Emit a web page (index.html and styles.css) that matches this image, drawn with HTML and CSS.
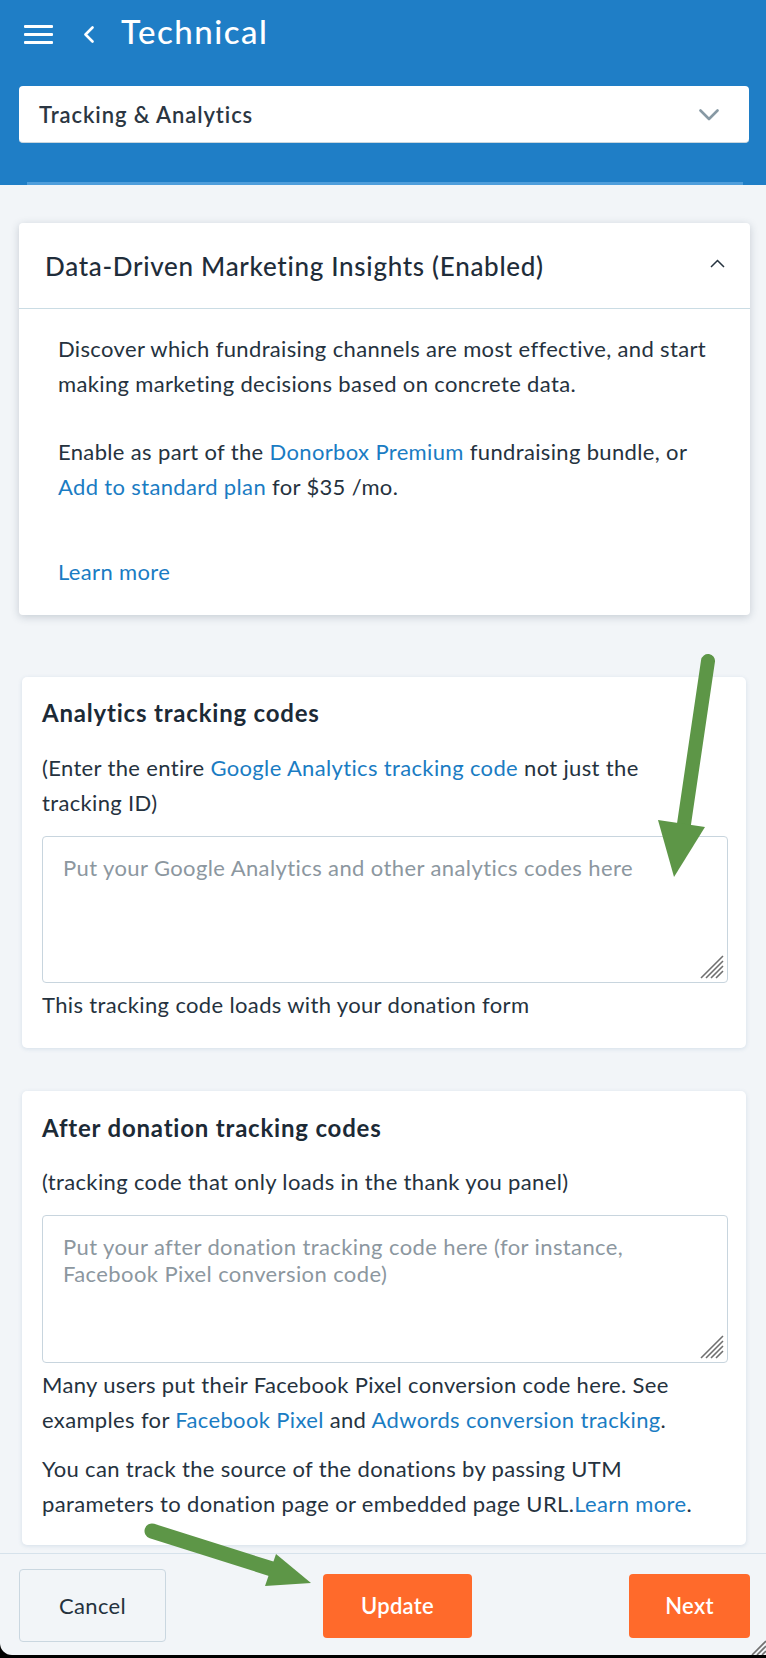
FILE: index.html
```html
<!DOCTYPE html>
<html lang="en">
<head>
<meta charset="utf-8">
<title>Technical – Tracking &amp; Analytics</title>
<link rel="stylesheet" href="styles.css">
</head>
<body>
<div class="app">
  <header class="header">
    <div class="topbar">
      <svg class="icon-menu" width="29" height="19" viewBox="0 0 29 19" aria-hidden="true">
        <rect x="0" y="0" width="29" height="3" rx="1" fill="#fff"/>
        <rect x="0" y="8" width="29" height="3" rx="1" fill="#fff"/>
        <rect x="0" y="16" width="29" height="3" rx="1" fill="#fff"/>
      </svg>
      <svg class="icon-back" width="12" height="17" viewBox="0 0 12 17" aria-hidden="true">
        <path d="M9.5 1.5 L2.5 8.5 L9.5 15.5" fill="none" stroke="#fff" stroke-width="2.6" stroke-linecap="round" stroke-linejoin="round"/>
      </svg>
      <h1 class="title">Technical</h1>
    </div>
    <div class="select">
      <span class="select-label">Tracking &amp; Analytics</span>
      <svg class="select-caret" width="20" height="12" viewBox="0 0 20 12" aria-hidden="true">
        <path d="M1.5 1.5 L10 10 L18.5 1.5" fill="none" stroke="#8799a4" stroke-width="2.6" stroke-linecap="round" stroke-linejoin="round"/>
      </svg>
    </div>
    <div class="tab-line"></div>
  </header>

  <main class="content">
    <section class="panel">
      <div class="panel-head">
        <h2 class="panel-title">Data-Driven Marketing Insights (Enabled)</h2>
        <svg class="panel-caret" width="15" height="9" viewBox="0 0 15 9" aria-hidden="true">
          <path d="M1 8 L7.5 1.5 L14 8" fill="none" stroke="#26333f" stroke-width="1.5"/>
        </svg>
      </div>
      <div class="panel-body">
        <p class="text">Discover which fundraising channels are most effective, and start making marketing decisions based on concrete data.</p>
        <p class="text gap-33">Enable as part of the <a class="link" href="#">Donorbox Premium</a> fundraising bundle, or <a class="link" href="#">Add to standard plan</a> for $35 /mo.</p>
        <p class="text gap-50"><a class="link" href="#">Learn more</a></p>
      </div>
    </section>

    <section class="card card-analytics">
      <h3 class="card-title">Analytics tracking codes</h3>
      <p class="text card-text gap-20">(Enter the entire <a class="link" href="#">Google Analytics tracking code</a> not just the tracking ID)</p>
      <div class="field gap-16">
        <textarea class="code-input code-input-a" placeholder="Put your Google Analytics and other analytics codes here"></textarea>
        <svg class="grip" width="26" height="26" viewBox="0 0 26 26" aria-hidden="true">
          <path d="M2 24 L24 2 M7 24 L24 7 M12 24 L24 12 M17 24 L24 17" stroke="#707070" stroke-width="1.6"/>
        </svg>
      </div>
      <p class="text card-text gap-4">This tracking code loads with your donation form</p>
    </section>

    <section class="card card-after">
      <h3 class="card-title">After donation tracking codes</h3>
      <p class="text card-text gap-19">(tracking code that only loads in the thank you panel)</p>
      <div class="field gap-16">
        <textarea class="code-input code-input-b" placeholder="Put your after donation tracking code here (for instance, Facebook Pixel conversion code)"></textarea>
        <svg class="grip" width="26" height="26" viewBox="0 0 26 26" aria-hidden="true">
          <path d="M2 24 L24 2 M7 24 L24 7 M12 24 L24 12 M17 24 L24 17" stroke="#707070" stroke-width="1.6"/>
        </svg>
      </div>
      <p class="text card-text gap-4">Many users put their Facebook Pixel conversion code here. See examples for <a class="link" href="#">Facebook Pixel</a> and <a class="link" href="#">Adwords conversion tracking</a>.</p>
      <p class="text card-text gap-14">You can track the source of the donations by passing UTM parameters to donation page or embedded page URL.<a class="link" href="#">Learn more</a>.</p>
    </section>
  </main>

  <footer class="footer">
    <button class="btn btn-cancel" type="button">Cancel</button>
    <button class="btn btn-primary btn-update" type="button">Update</button>
    <button class="btn btn-primary btn-next" type="button">Next</button>
    <svg class="window-grip" width="16" height="16" viewBox="0 0 16 16" aria-hidden="true">
      <path d="M2 16 L16 2 M7 16 L16 7 M12 16 L16 12" stroke="#707070" stroke-width="1.6"/>
    </svg>
  </footer>

  <svg class="pointers" width="766" height="1658" viewBox="0 0 766 1658" aria-hidden="true">
    <g fill="#5d9647" stroke="#5d9647">
      <path d="M708 661 L684 824" fill="none" stroke-width="14" stroke-linecap="round"/>
      <polygon points="658,820 705,827 674,877" stroke="none"/>
      <path d="M152 1531 L272 1569" fill="none" stroke-width="15" stroke-linecap="round"/>
      <polygon points="276,1554 265,1586 311,1583" stroke="none"/>
    </g>
  </svg>
</div>
</body>
</html>
```

FILE: styles.css
```css
* {
  box-sizing: border-box;
}

html,
body {
  margin: 0;
  padding: 0;
  background: #000;
}

body {
  font-family: Lato, "Open Sans", "Liberation Sans", sans-serif;
  color: #25323e;
}

.app {
  position: relative;
  width: 766px;
  height: 1658px;
  display: flex;
  flex-direction: column;
  background: #000;
}

/* ---------- blue header ---------- */
.header {
  background: #1f7ec6;
  height: 185px;
  padding: 0 17px 0 19px;
  display: flex;
  flex-direction: column;
}

.topbar {
  height: 68px;
  display: flex;
  align-items: center;
  padding-left: 5px;
}

.icon-menu {
  display: block;
  flex: none;
}

.icon-back {
  display: block;
  flex: none;
  margin-left: 30px;
}

.title {
  margin: 0 0 5px 26px;
  font-size: 33px;
  font-weight: 500;
  line-height: 1;
  color: #fff;
  letter-spacing: 1.5px;
}

.select {
  margin-top: 18px;
  height: 57px;
  background: #fff;
  border-radius: 4px;
  border-bottom: 1px solid #c9d6de;
  display: flex;
  align-items: center;
  justify-content: space-between;
  padding: 0 30px 0 20px;
}

.select-label {
  font-size: 22px;
  font-weight: 600;
  letter-spacing: 0.9px;
  color: #2b3642;
}

.select-caret {
  display: block;
  margin-top: 1px;
}

.tab-line {
  margin: 39px 6px 0 8px;
  height: 3px;
  background: #4f9edb;
}

/* ---------- content ---------- */
.content {
  flex: 1;
  background: #f2f5f8;
  padding: 38px 16px 0 19px;
}

.text {
  margin: 0;
  font-size: 22px;
  line-height: 35px;
  letter-spacing: 0.35px;
  color: #25323e;
}

.card-text {
  max-width: 664px;
}

.link {
  color: #1a7cc3;
  text-decoration: none;
}

.gap-4 { margin-top: 4px; }
.gap-14 { margin-top: 14px; }
.gap-16 { margin-top: 16px; }
.gap-19 { margin-top: 19px; }
.gap-20 { margin-top: 20px; }
.gap-33 { margin-top: 33px; }
.gap-50 { margin-top: 50px; }

.panel {
  background: #fff;
  border-radius: 4px;
  box-shadow: 0 2px 9px rgba(40, 60, 80, 0.22);
}

.panel-head {
  height: 86px;
  border-bottom: 1px solid #cadce4;
  display: flex;
  align-items: center;
  justify-content: space-between;
  padding: 0 25px 0 26px;
}

.panel-title {
  margin: 0;
  font-size: 26px;
  font-weight: 500;
  letter-spacing: 0.7px;
  color: #1f2d3a;
}

.panel-caret {
  display: block;
  margin-top: -5px;
}

.panel-body {
  padding: 22px 30px 26px 39px;
}

.card {
  background: #fff;
  border-radius: 5px;
  box-shadow: 0 1px 4px rgba(60, 110, 160, 0.16);
  margin: 0 4px 0 3px;
  padding: 18px 18px 26px 20px;
}

.card-analytics {
  margin-top: 62px;
}

.card-after {
  margin-top: 43px;
  padding-top: 19px;
  padding-bottom: 24px;
}

.card-title {
  margin: 0;
  font-size: 24px;
  font-weight: 700;
  line-height: 35px;
  letter-spacing: 0.8px;
  color: #1c2a36;
}

.field {
  position: relative;
}

.code-input {
  display: block;
  width: 100%;
  resize: none;
  border: 1px solid #c8d5de;
  border-radius: 4px;
  padding: 17px 20px;
  font-family: Lato, "Open Sans", "Liberation Sans", sans-serif;
  font-size: 22px;
  line-height: 27px;
  letter-spacing: 0.4px;
  color: #25323e;
  background: #fff;
  outline: none;
}

.code-input::placeholder {
  color: #8c979f;
}

.code-input-a {
  height: 147px;
}

.code-input-b {
  height: 148px;
}

.grip {
  position: absolute;
  right: 3px;
  bottom: 3px;
}

/* ---------- footer ---------- */
.footer {
  position: relative;
  height: 102px;
  margin-bottom: 3px;
  background: #f2f5f8;
  border-top: 1px solid #d6e2eb;
  border-bottom-left-radius: 12px;
  padding: 15px 16px 13px 19px;
  display: flex;
  align-items: center;
  justify-content: space-between;
}

.btn {
  font-family: Lato, "Open Sans", "Liberation Sans", sans-serif;
  font-size: 22px;
  letter-spacing: 0.3px;
  border-radius: 4px;
  cursor: pointer;
}

.btn-cancel {
  width: 147px;
  height: 73px;
  background: transparent;
  border: 1px solid #cad7e0;
  color: #25323e;
}

.btn-primary {
  height: 64px;
  border: none;
  background: #ff6a2b;
  color: #fff;
  font-weight: 600;
}

.btn-update {
  width: 149px;
}

.btn-next {
  width: 121px;
}

.window-grip {
  position: absolute;
  right: 0;
  bottom: 0;
}

.pointers {
  position: absolute;
  left: 0;
  top: 0;
  pointer-events: none;
}
```
